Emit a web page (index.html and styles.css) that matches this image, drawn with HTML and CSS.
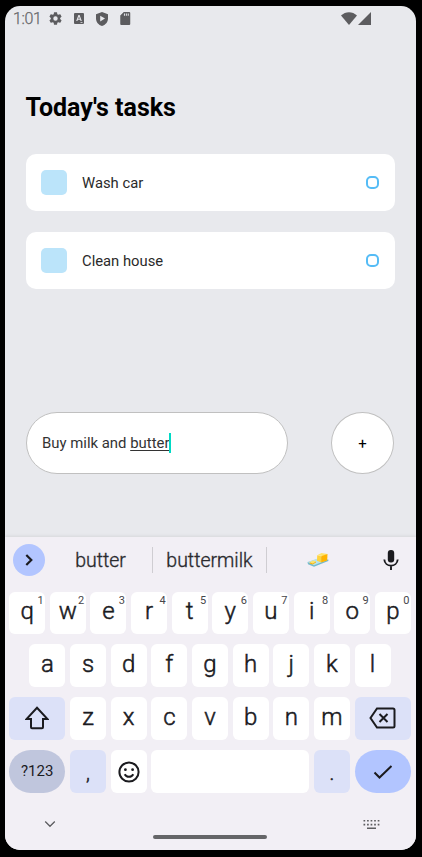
FILE: index.html
```html
<!DOCTYPE html>
<html lang="en">
<head>
<meta charset="utf-8">
<title>Today's tasks</title>
<link rel="stylesheet" href="styles.css">
</head>
<body>
<div class="phone">
  <header class="status">
    <span class="clock">1:01</span>
    <svg class="st gear" viewBox="2 2 20 20"><path fill-rule="evenodd" d="M19.14 12.94a7 7 0 0 0 0-1.88l2.03-1.58a.5.5 0 0 0 .12-.61l-1.92-3.32a.5.5 0 0 0-.59-.22l-2.39.96a7 7 0 0 0-1.62-.94l-.36-2.54a.5.5 0 0 0-.48-.41h-3.84a.5.5 0 0 0-.47.41l-.36 2.54a7 7 0 0 0-1.62.94l-2.39-.96a.5.5 0 0 0-.59.22L2.74 8.87a.5.5 0 0 0 .12.61l2.03 1.58a7 7 0 0 0 0 1.88l-2.03 1.58a.5.5 0 0 0-.12.61l1.92 3.32c.12.22.37.29.59.22l2.39-.96c.5.38 1.03.7 1.62.94l.36 2.54c.05.24.24.41.48.41h3.84c.24 0 .44-.17.47-.41l.36-2.54a7 7 0 0 0 1.62-.94l2.39.96c.22.08.47 0 .59-.22l1.92-3.32a.5.5 0 0 0-.12-.61zM12 15.4a3.4 3.4 0 1 1 0-6.8 3.4 3.4 0 0 1 0 6.8z"/></svg>
    <svg class="st lang" viewBox="0 0 10 11"><path fill-rule="evenodd" d="M1 0h8a1 1 0 0 1 1 1v9a1 1 0 0 1-1 1H1a1 1 0 0 1-1-1V1a1 1 0 0 1 1-1zM4.400 2 2.200 8h1.200l.4-1.200h2.400L6.600 8h1.200L5.600 2zM5 3.500l.8 2.300H4.200zM6.500 9.200v.7h2v-.7z"/></svg>
    <svg class="st shield" viewBox="0 0 12 14"><path fill-rule="evenodd" d="M6 0l6 2.300V6.500c0 3.500-2.500 6.500-6 7.500-3.500-1-6-4-6-7.500V2.300zM4.200 3.800v5.600L9 6.600z"/></svg>
    <svg class="st card-icon" viewBox="0 0 10 13"><path fill-rule="evenodd" d="M3.500 0H9a1 1 0 0 1 1 1v11a1 1 0 0 1-1 1H1a1 1 0 0 1-1-1V3.600zM3.700 1.500v2.300h1V1.500zM5.600 1.500v2.300h1V1.500zM7.500 1.500v2.300h1V1.500z"/></svg>
    <svg class="st wifi" viewBox="0 0 16 13"><path d="M0 3.500C4.500-1 11.500-1 16 3.500L8 13z"/></svg>
    <svg class="st cell" viewBox="0 0 13 13"><path d="M13 0v13H0z"/></svg>
  </header>

  <main class="tasks">
    <h1>Today's tasks</h1>
    <div class="task"><span class="square"></span><span>Wash car</span><span class="ring"></span></div>
    <div class="task"><span class="square"></span><span>Clean house</span><span class="ring"></span></div>
  </main>

  <div class="compose">
    <div class="field">Buy milk and&nbsp;<span class="composing">butter</span><span class="caret"></span></div>
    <div class="add">+</div>
  </div>

  <section class="keyboard">
    <div class="suggest">
      <span class="expand"><svg width="32" height="32" viewBox="0 0 32 32"><path d="M13.300 11l5 5-5 5"/></svg></span>
      <span class="word first">butter</span>
      <span class="word mid">buttermilk</span>
      <span class="word emoji"><svg width="22" height="16" viewBox="0 0 22 16"><path fill="#73b9ce" d="M.5 10.300 15 5.500l6.500 2.300-.2 1.200L7 14.800 1 12.300z"/><path fill="#b7e2eb" d="M.5 10 14.500 5.200l7 2.400L7 13.200z"/><path fill="#ffe36a" d="M10.200 3.200 14.500 1l6 1.100-3.600 2.200z"/><path fill="#ffd33d" d="M10.200 3.200l4 1.100v6.200L10 8.800z"/><path fill="#ffb300" d="M14.200 4.300l6.300-2.200-.3 6.300-6 2.100z"/><path fill="#ffe36a" d="M2.500 10.200 6 8.400l3 1.200-3.300 1.900z"/><path fill="#ffb300" d="M5.700 11.500l3.300-1.900v1L5.700 12.600l-3-1.200v-1.200z"/></svg></span>
      <svg class="mic" width="16" height="22" viewBox="0 0 16 22"><rect x="4.800" y="1" width="6.400" height="12.500" rx="3" fill="#1b1b1f"/><path d="M1.300 10.500c.6 8.200 12.800 8.200 13.400 0M8 16.500V21" fill="none" stroke="#1b1b1f" stroke-width="1.900"/></svg>
    </div>
    <div class="row">
      <span class="key">q<sup>1</sup></span><span class="key">w<sup>2</sup></span><span class="key">e<sup>3</sup></span><span class="key">r<sup>4</sup></span><span class="key">t<sup>5</sup></span><span class="key">y<sup>6</sup></span><span class="key">u<sup>7</sup></span><span class="key">i<sup>8</sup></span><span class="key">o<sup>9</sup></span><span class="key">p<sup>0</sup></span>
    </div>
    <div class="row">
      <span class="key">a</span><span class="key">s</span><span class="key">d</span><span class="key">f</span><span class="key">g</span><span class="key">h</span><span class="key">j</span><span class="key">k</span><span class="key">l</span>
    </div>
    <div class="row">
      <span class="key wide tint"><svg width="24" height="24" viewBox="0 0 24 24"><path d="M12 1.800 22.500 13H18v8.200a1 1 0 0 1-1 1H7a1 1 0 0 1-1-1V13H1.500z"/></svg></span>
      <span class="key">z</span><span class="key">x</span><span class="key">c</span><span class="key">v</span><span class="key">b</span><span class="key">n</span><span class="key">m</span>
      <span class="key wide tint"><svg width="27" height="22" viewBox="0 0 27 22"><path d="M8 1.500h16a1.500 1.500 0 0 1 1.500 1.500v16a1.500 1.500 0 0 1-1.500 1.500H8L1.500 11zM10.500 7l8 8M18.500 7l-8 8"/></svg></span>
    </div>
    <div class="row last">
      <span class="key wide sym">?123</span>
      <span class="key tint punct">,</span>
      <span class="key"><svg width="22" height="22" viewBox="0 0 22 22"><circle cx="11" cy="11" r="9.600"/><path d="M6.700 13.300c1.800 3.400 6.800 3.400 8.600 0"/><circle class="dot" cx="7.400" cy="8.700" r="1.400"/><circle class="dot" cx="14.600" cy="8.700" r="1.400"/></svg></span>
      <span class="key space"></span>
      <span class="key tint punct">.</span>
      <span class="key wide enter"><svg width="22" height="18" viewBox="0 0 22 18"><path d="M2.500 9.500l5 5L19.500 3"/></svg></span>
    </div>
    <div class="nav">
      <svg width="12" height="8" viewBox="0 0 12 8"><path d="M1.200 1.500 6 6.300l4.800-4.800" fill="none" stroke="#5d5d60" stroke-width="1.300"/></svg>
      <span class="home"></span>
      <svg width="17" height="11" viewBox="0 0 17 11" fill="none" stroke="#5d5d60" stroke-width="1.600"><path d="M.5 1.800h16M.5 5.600h16" stroke-dasharray="1.700 1.850"/><path d="M4 9.300h9"/></svg>
    </div>
  </section>
</div>
</body>
</html>
```
FILE: styles.css
```css
* { box-sizing: border-box; }
body { margin: 0; height: 857px; padding: 6px 6px 7px 5px; background: #000; font-family: Roboto, sans-serif; overflow: hidden; }
.phone { width: 411px; height: 844px; border-radius: 15px; background: #e8e9ed; overflow: hidden; display: flex; flex-direction: column; }

.status { height: 25px; padding: 0 45.500px 0 8px; display: flex; align-items: center; color: #666669; flex: none; }
.clock { width: 36px; font-size: 16px; line-height: 25px; font-weight: 300; letter-spacing: -.4px; -webkit-text-stroke: .25px #666669; }
.st { fill: #5c5c5f; flex: none; }
.gear { width: 13px; height: 13px; }
.lang { width: 10px; height: 11px; margin-left: 12px; }
.shield { width: 12px; height: 14px; margin-left: 12px; }
.card-icon { width: 10.500px; height: 13px; margin-left: 12px; }
.wifi { width: 16px; height: 13px; margin-left: auto; }
.cell { width: 13px; height: 13px; margin-left: 1px; }

.tasks { padding: 62px 21.500px 0 20.500px; height: 381px; flex: none; }
h1 { margin: 0 0 31px; font-size: 25px; line-height: 30px; font-weight: 700; color: #000; }
.task { height: 56.500px; margin-bottom: 21.500px; padding: 0 15.500px; display: flex; align-items: center; background: #fff; border-radius: 10px; font-size: 14.800px; color: #2a2a2a; }
.task > span { position: relative; top: 1px; }
.task .square { width: 25.500px; height: 25.500px; margin-right: 15.500px; border-radius: 5px; background: #bbe4fa; top: 0; }
.task .ring { width: 13px; height: 13px; margin-left: auto; border: 2px solid #55bcf6; border-radius: 5px; top: 0; }

.compose { display: flex; justify-content: space-between; padding: 0 22px 0 21px; height: 125px; flex: none; }
.field { width: 262px; height: 62px; padding: 0 0 0 15px; display: flex; align-items: center; background: #fff; border: 1px solid #c0c0c0; border-radius: 31px; font-size: 14.900px; color: #333; }
.composing { text-decoration: underline; text-underline-offset: 2px; }
.caret { width: 2px; height: 20px; background: #00dac5; }
.add { width: 63px; height: 62px; padding-top: 2px; border: 1px solid #c0c0c0; border-radius: 50%; background: #fff; display: flex; align-items: center; justify-content: center; font-size: 15px; }

.keyboard { flex: 1; background: #f2eff5; padding: 0 5px 0 4px; color: #1b1b1f; box-shadow: 0 -1px 3px rgba(0,0,0,.08); }
.suggest { height: 46px; margin-bottom: 8.500px; display: flex; align-items: center; }
.expand { width: 32px; height: 32px; margin-left: 4px; border-radius: 50%; background: #b2c5ff; }
.expand path { fill: none; stroke: #1b1b1f; stroke-width: 2.200; }
.word { width: 107px; height: 26px; display: flex; align-items: center; justify-content: center; font-size: 19.500px; color: #2a2a2e; font-weight: 300; -webkit-text-stroke: .35px #2a2a2e; }
.first { padding-left: 4px; }
.emoji { padding-right: 5px; }
.mid { width: 115px; border: solid #cfcdd2; border-width: 0 1px; }
.mic { margin-left: auto; margin-right: 12px; }
.row { display: flex; justify-content: center; gap: 4.600px; height: 42.500px; margin-bottom: 10.300px; }
.key { position: relative; width: 36.060px; flex: none; background: #fff; border-radius: 6px; display: flex; align-items: center; justify-content: center; font-size: 24px; padding-bottom: 3px; font-weight: 300; -webkit-text-stroke: .5px #1b1b1f; }
.key sup { position: absolute; top: 3px; right: 1.500px; font-size: 11px; line-height: 12px; color: #46464a; font-weight: 400; -webkit-text-stroke: 0; }
.key svg { fill: none; stroke: #1b1b1f; stroke-width: 2; position: relative; top: 1.500px; }
.key .dot { fill: #1b1b1f; stroke: none; }
.wide { width: 56.400px; }
.tint { background: #dce1f8; }
.sym { background: #c0c6dd; border-radius: 22px; font-size: 15px; font-weight: 400; padding-bottom: 1px; -webkit-text-stroke: 0; }
.punct { font-size: 20px; padding-top: 5px; }
.space { width: 158.040px; }
.enter { background: #b2c5ff; border-radius: 22px; }
.last { height: 43.500px; margin-bottom: 0; }
.nav { height: 57px; padding: 5px 31px 0 35px; display: flex; align-items: center; justify-content: space-between; }
.home { width: 114px; height: 4px; margin-top: 26px; margin-left: 1px; border-radius: 2px; background: #656568; }
```
